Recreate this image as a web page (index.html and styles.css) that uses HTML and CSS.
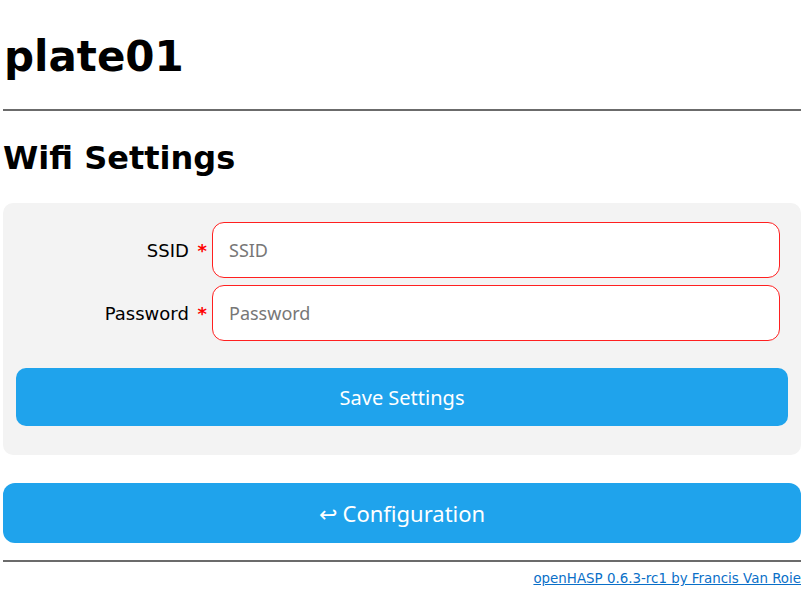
FILE: index.html
```html
<!DOCTYPE html>
<html lang="en">
<head>
<meta charset="utf-8">
<title>plate01</title>
<link rel="stylesheet" href="styles.css">
</head>
<body>
<div class="page">
  <h1 class="title">plate01</h1>
  <hr class="rule">
  <h2 class="subtitle">Wifi Settings</h2>
  <form class="panel">
    <div class="row">
      <label class="label" for="ssid">SSID <span class="req">*</span></label>
      <input class="field" id="ssid" type="text" placeholder="SSID">
    </div>
    <div class="row">
      <label class="label" for="pass">Password <span class="req">*</span></label>
      <input class="field" id="pass" type="password" placeholder="Password">
    </div>
    <button class="btn btn-save" type="button">Save Settings</button>
  </form>
  <button class="btn btn-config" type="button">&#8617; Configuration</button>
  <hr class="rule rule-bottom">
  <div class="footer"><a class="link" href="#">openHASP 0.6.3-rc1 by Francis Van Roie</a></div>
</div>
</body>
</html>
```
FILE: styles.css
```css
html, body {
  margin: 0;
  padding: 0;
  background: #fff;
}
.page {
  padding: 0 9px 0 3px;
  font-family: "DejaVu Sans", Verdana, sans-serif;
  color: #000;
}
.title {
  font-family: "DejaVu Sans", Verdana, sans-serif;
  font-weight: bold;
  font-size: 42px;
  line-height: 48px;
  margin: 0;
  padding: 33px 0 0 1px;
  height: 48px;
}
.rule {
  border: none;
  border-top: 2px solid #6b6b6b;
  height: 0;
  margin: 28px 0 0 0;
}
.subtitle {
  font-size: 32px;
  font-weight: bold;
  line-height: 38px;
  margin: 28px 0 0 0;
}
.panel {
  background: #f3f3f3;
  border-radius: 10px;
  margin: 26px 0 0 0;
  padding: 19px 13px 29px 13px;
  display: flex;
  flex-direction: column;
}
.row {
  display: grid;
  grid-template-columns: 196px 568px;
  align-items: center;
}
.row + .row {
  margin-top: 7px;
}
.label {
  font-size: 18px;
  text-align: right;
  padding-right: 5px;
}
.req {
  color: #ff0000;
  font-weight: bold;
  margin-left: 3px;
}
.field {
  box-sizing: border-box;
  height: 56px;
  width: 568px;
  border: 1px solid #ff2020;
  border-radius: 12px;
  background: #fff;
  padding: 0 16px;
  font-family: "Noto Sans", "Open Sans", sans-serif;
  font-size: 18px;
  color: #000;
  outline: none;
}
.field::placeholder {
  color: #777;
}
.btn {
  display: block;
  border: none;
  background: #1fa3ec;
  color: #fff;
  font-family: "Noto Sans", "Open Sans", sans-serif;
  cursor: pointer;
}
.btn-save {
  margin-top: 27px;
  height: 58px;
  border-radius: 10px;
  font-size: 20px;
  width: 100%;
}
.btn-config {
  margin-top: 28px;
  height: 60px;
  border-radius: 12px;
  font-size: 22px;
  width: 100%;
}
.rule-bottom {
  margin-top: 17px;
}
.footer {
  text-align: right;
  padding-top: 9px;
  font-size: 13.4px;
}
.link {
  color: #0a6fc8;
  text-decoration: underline;
}
```
